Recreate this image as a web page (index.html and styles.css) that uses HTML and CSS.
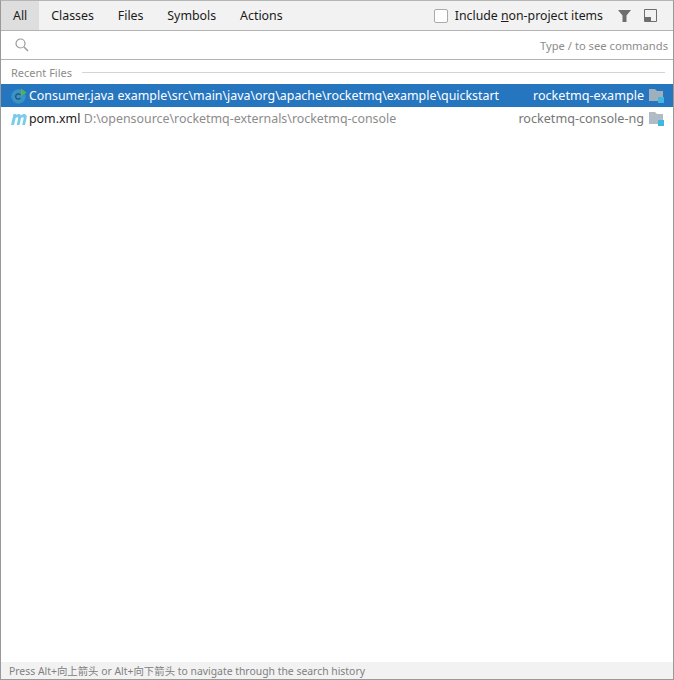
FILE: index.html
```html
<!DOCTYPE html>
<html lang="en">

<head>
  <meta charset="UTF-8">
  <meta name="viewport" content="width=device-width, initial-scale=1.0">
  <title>Search Everywhere</title>
  <link rel="stylesheet" href="styles.css">
</head>

<body>
  <div class="popup">
    <div class="toolbar">
      <div class="tabs">
        <div class="tab active">All</div>
        <div class="tab">Classes</div>
        <div class="tab">Files</div>
        <div class="tab">Symbols</div>
        <div class="tab">Actions</div>
      </div>
      <div class="tools">
        <span class="checkbox"></span>
        <span class="check-label">Include <u>n</u>on-project items</span>
        <svg class="filter-icon" width="14" height="14" viewBox="0 0 14 14">
          <path d="M1 1H14L9.500 6.500V13H5.500V6.500Z" fill="#6e6e6e" />
        </svg>
        <svg class="pin-icon" width="13" height="13" viewBox="0 0 13 13">
          <path d="M.5 .5H12.500V12.500H.5Z" fill="none" stroke="#6e6e6e" />
          <path d="M1 8H7V12H1Z" fill="#6e6e6e" />
        </svg>
      </div>
    </div>

    <div class="search">
      <svg class="search-icon" width="14" height="14" viewBox="0 0 14 14">
        <circle cx="5.500" cy="5.500" r="4.500" fill="none" stroke="#9a9a9a" stroke-width="1.200" />
        <path d="M9 9L13 13" stroke="#9a9a9a" stroke-width="1.400" />
      </svg>
      <span class="hint">Type / to see commands</span>
    </div>

    <div class="results">
      <div class="section">
        <span>Recent Files</span>
        <div class="section-line"></div>
      </div>
      <div class="row selected">
        <svg class="file-icon" width="16" height="16" viewBox="0 0 16 16">
          <circle cx="7.500" cy="8.500" r="7.200" fill="#3a92c6" />
          <path d="M9.400 7A2.600 2.600 0 1 0 9.400 10" fill="none" stroke="#1f4f6b" stroke-width="1.200" />
          <path d="M10 0.500L15.500 4.500L10 8Z" fill="#4fb35a" />
        </svg>
        <span class="file-name">Consumer.java</span>
        <span class="file-path">example\src\main\java\org\apache\rocketmq\example\quickstart</span>
        <span class="module">rocketmq-example</span>
        <svg class="module-icon" width="15" height="16" viewBox="0 0 15 16">
          <path d="M0 1H6L8 3H14V13H0Z" fill="#9fb0bd" />
          <rect x="9" y="9" width="6" height="6" fill="#40b6e0" />
        </svg>
      </div>
      <div class="row">
        <svg class="file-icon" width="16" height="16" viewBox="0 0 16 16">
          <path d="M0 14L2.500 3H5.500L5.200 4.400C6.200 3.100 8 2.500 9.200 3.400C9.700 3.700 9.900 4.100 10 4.500C11 3.200 13 2.400 14.600 3.400C15.900 4.200 15.900 5.600 15.600 7L14 14H11.200L12.600 7.500C12.900 6 11.400 5.500 10 7.200L8.500 14H5.700L7.100 7.500C7.400 6 5.900 5.500 4.600 7.200L3 14Z" fill="#7accec" />
        </svg>
        <span class="file-name">pom.xml</span>
        <span class="file-path">D:\opensource\rocketmq-externals\rocketmq-console</span>
        <span class="module">rocketmq-console-ng</span>
        <svg class="module-icon" width="15" height="16" viewBox="0 0 15 16">
          <path d="M0 1H6L8 3H14V13H0Z" fill="#b0bcc5" />
          <rect x="9" y="9" width="6" height="6" fill="#40b6e0" />
        </svg>
      </div>
    </div>

    <div class="footer">Press Alt+向上箭头 or Alt+向下箭头 to navigate through the search history</div>
  </div>
</body>

</html>
```

FILE: styles.css
```css
html,
body {
  margin: 0;
  height: 100%;
}

body {
  font-family: "Noto Sans", "Noto Sans CJK SC", sans-serif;
  font-size: 12.400px;
  color: #1a1a1a;
  background-color: #fff;
}

.popup {
  box-sizing: border-box;
  height: 680px;
  display: flex;
  flex-direction: column;
  border: 1px solid #999;
  border-top-color: #b5b5b5;
}

/* Top bar */
.toolbar {
  height: 29px;
  display: flex;
  justify-content: space-between;
  background-color: #f2f2f2;
  border-bottom: 1px solid #b3b3b3;
  flex-shrink: 0;
}

.tabs {
  display: flex;
}

.tab {
  display: flex;
  align-items: center;
  padding: 0 11.900px;
}

.tab.active {
  padding: 0 12px;
  background-color: #dedede;
}

.tools {
  display: flex;
  align-items: center;
}

.checkbox {
  box-sizing: border-box;
  width: 14px;
  height: 14px;
  background-color: #fff;
  border: 1px solid #aaa;
  border-radius: 2px;
  margin-right: 7px;
}

.check-label {
  font-size: 12.300px;
  margin-right: 14px;
}

.filter-icon {
  margin-right: 13px;
}

.pin-icon {
  margin-right: 16px;
}

/* Search field */
.search {
  height: 28px;
  display: flex;
  align-items: center;
  justify-content: space-between;
  padding: 0 5px 0 14px;
  border-bottom: 1px solid #b3b3b3;
  flex-shrink: 0;
}

.hint {
  font-size: 11.200px;
  color: #8c8c8c;
}

/* Result list */
.results {
  flex: 1;
}

.section {
  height: 24px;
  display: flex;
  align-items: center;
  gap: 10px;
  padding: 0 8px 0 10px;
  font-size: 11px;
  color: #8c8c8c;
  box-sizing: border-box;
}

.section-line {
  flex: 1;
  height: 1px;
  background-color: #d4d4d4;
}

.row {
  height: 23px;
  display: flex;
  align-items: center;
  padding: 0 9px 0 10px;
}

.row.selected {
  background-color: #2675bf;
  color: #fff;
}

.file-icon {
  margin-right: 2px;
  flex-shrink: 0;
}

.file-name {
  margin-right: 3.500px;
}

.file-path {
  color: #8c8c8c;
}

.selected .file-path {
  color: #fff;
}

.module {
  margin-left: auto;
  margin-right: 5px;
  font-size: 12.600px;
  color: #777;
}

.selected .module {
  color: #fff;
}

.footer {
  height: 17px;
  display: flex;
  align-items: center;
  padding-left: 8px;
  font-size: 10.400px;
  color: #808080;
  background-color: #f2f2f2;
  flex-shrink: 0;
}
```
